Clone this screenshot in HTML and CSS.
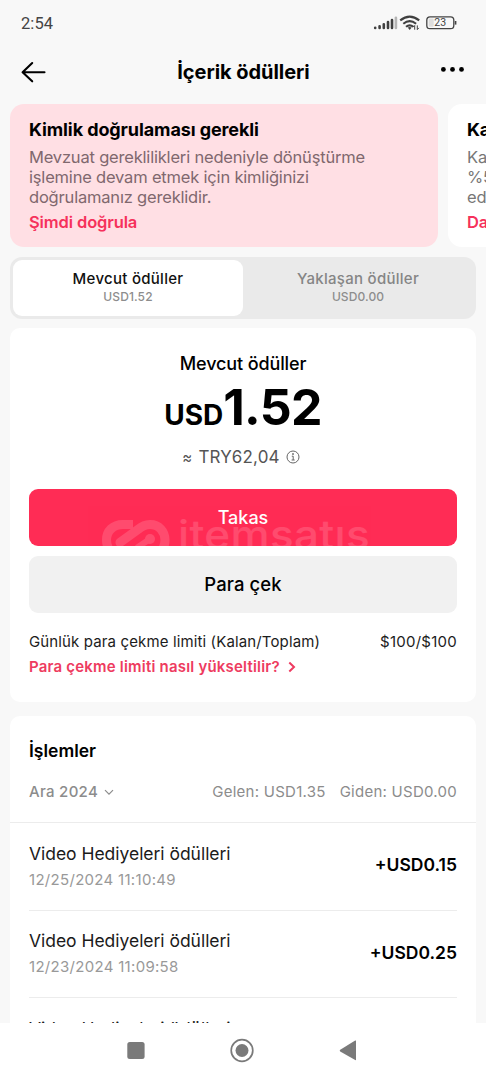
FILE: index.html
```
<!DOCTYPE html>
<html lang="tr">
<head>
<meta charset="utf-8">
<title>İçerik ödülleri</title>
<link rel="stylesheet" href="styles.css">
</head>
<body>
<div class="screen">
  <div class="status">
    <span class="clock">2:54</span>
    <svg class="status-icons" width="84" height="18" viewBox="0 0 84 18">
      <g stroke="#404040" stroke-width="2.6" stroke-linecap="round">
        <path d="M2.2 14v-.3M6.6 14v-1.8M10.8 14v-3.8M15 14v-6M19 14v-8"/>
        <path d="M22.9 14V3.8" stroke="#b5b5b5"/>
      </g>
      <g fill="none" stroke="#404040" stroke-width="2.1">
        <path d="M27.2 6.4q9.5-7.6 19 0"/>
        <path d="M30.3 9.7q6.4-5.2 12.8 0"/>
        <path d="M33 12.8q3.7-3 7.4 0"/>
      </g>
      <path d="M34.7 13.6q2-1.3 4 0l-2 2.4z" fill="#404040"/>
      <path d="M41.7 15.7v-4.2l-1.5 1.6M44.3 11.4v4.2l1.5-1.7" fill="none" stroke="#404040" stroke-width="1"/>
      <rect x="53.8" y="2.8" width="27" height="11.8" rx="3.2" fill="none" stroke="#444" stroke-width="1.3"/>
      <rect x="55.7" y="4.6" width="5" height="8.2" rx="1.2" fill="#dedede"/>
      <path d="M82.6 7v3.6" stroke="#444" stroke-width="1.6"/>
      <text class="battery" x="67.2" y="12.4" text-anchor="middle">23</text>
    </svg>
  </div>

  <header class="nav">
    <svg width="26" height="22" viewBox="0 0 26 22" fill="none" stroke="#000" stroke-width="2.1" stroke-linecap="round" stroke-linejoin="round"><path d="M11.2 2 1.6 11.3l9.6 9M1.8 11.3H23.5"/></svg>
    <h1>İçerik ödülleri</h1>
    <svg width="26" height="8" viewBox="0 0 26 8"><circle cx="3.4" cy="4.4" r="2.4"/><circle cx="12.5" cy="4.4" r="2.4"/><circle cx="21.5" cy="4.4" r="2.4"/></svg>
  </header>

  <section class="notices">
    <article class="notice notice-alert">
      <h2>Kimlik doğrulaması gerekli</h2>
      <p>Mevzuat gereklilikleri nedeniyle dönüştürme<br>işlemine devam etmek için kimliğinizi<br>doğrulamanız gereklidir.</p>
      <a>Şimdi doğrula</a>
    </article>
    <article class="notice">
      <h2>Ka</h2>
      <p>Ka<br>%5<br>ed</p>
      <a>Da</a>
    </article>
  </section>

  <div class="tabs">
    <div class="tab tab-active"><b>Mevcut ödüller</b><span>USD1.52</span></div>
    <div class="tab"><b>Yaklaşan ödüller</b><span>USD0.00</span></div>
  </div>

  <section class="card balance">
    <h2>Mevcut ödüller</h2>
    <div class="amount"><span class="currency">USD</span><span class="value">1.52</span></div>
    <div class="approx"><span class="tilde">≈</span><span>TRY62,04</span>
      <svg width="14" height="14" viewBox="0 0 14 14" fill="none" stroke="#666" stroke-width="1"><circle cx="7" cy="7" r="6"/><path d="M5.8 6.2H7.2V10M5.6 10h3.1"/><circle cx="7" cy="4" r=".5" fill="#666"/></svg>
    </div>
    <div class="button button-primary">
      <span>Takas</span>
      <div class="brand">
        <svg width="68" height="40" viewBox="0 0 68 40" fill="none" stroke="#fff" stroke-width="9" stroke-linecap="round">
          <path d="M31 4.5H21C11 4.5 4.5 11 4.5 20c0 8 5 14 13 15.500" stroke-linecap="butt"/>
          <path d="M18 22.500 36 9.500C40 6 45 4.500 48 4.500c9 0 15 7 15 15.500 0 9-6 15.500-15 15.500"/>
          <path d="m48 19-12 8" stroke-width="6"/>
          <circle cx="48" cy="19" r="5" fill="#fff" stroke="none"/>
        </svg>
        <span>itemsatış</span>
      </div>
    </div>
    <div class="button button-secondary"><span>Para çek</span></div>
    <div class="limit"><span>Günlük para çekme limiti (Kalan/Toplam)</span><span class="limit-value">$100/$100</span></div>
    <a class="limit-link">Para çekme limiti nasıl yükseltilir?
      <svg width="8" height="12" viewBox="0 0 8 12" fill="none" stroke="#ee3b60" stroke-width="2"><path d="M1.300 1.500 6 6l-4.700 4.500"/></svg></a>
  </section>

  <section class="card history">
    <div class="history-head">
      <h2>İşlemler</h2>
      <div class="filters">
        <span class="month">Ara 2024</span>
        <svg width="10" height="7" viewBox="0 0 10 7" fill="none" stroke="#8c8c8c" stroke-width="1.2"><path d="M1 1.200 5 5.200l4-4"/></svg>
        <span class="incoming">Gelen: USD1.35</span><span>Giden: USD0.00</span>
      </div>
    </div>
    <div class="row"><div><h3>Video Hediyeleri ödülleri</h3><time>12/25/2024 11:10:49</time></div><strong>+USD0.15</strong></div>
    <div class="row"><div><h3>Video Hediyeleri ödülleri</h3><time>12/23/2024 11:09:58</time></div><strong>+USD0.25</strong></div>
    <div class="row"><div><h3>Video Hediyeleri ödülleri</h3></div></div>
  </section>

  <nav class="system">
    <svg width="486" height="57" viewBox="0 0 486 57" fill="#7a7a7a">
      <rect x="127.300" y="19" width="17.300" height="17" rx="2.500"/>
      <circle cx="242" cy="27.500" r="10.800" fill="none" stroke="#7a7a7a" stroke-width="1.700"/><circle cx="242" cy="27.500" r="6.500"/>
      <path d="M356 18v18.600q0 .8-.8.4L340.200 28.400q-1-.9 0-1.700L355.200 17.600q.8-.4.8.4z"/>
    </svg>
  </nav>
</div>
</body>
</html>
```
FILE: styles.css
```
* { box-sizing: border-box; }
body { margin: 0; background: #f8f8f8; font-family: Inter, "Noto Sans", sans-serif; color: #000; }
h1, h2, h3, p { margin: 0; }
.screen { width: 486px; height: 1080px; overflow: hidden; display: flex; flex-direction: column; }

.status { height: 45px; flex: none; display: flex; justify-content: space-between; padding: 14px 29px 0 21px; }
.clock { font: 400 16.5px/20px Roboto, sans-serif; color: #444; letter-spacing: .1px; }
.status-icons { display: block; }
.battery { font: 400 10.5px Roboto, sans-serif; fill: #444; }

.nav { height: 59px; flex: none; display: flex; justify-content: space-between; padding: 0 20px 0 21px; }
.nav svg { flex: none; margin-top: 16px; }
.nav svg:last-child { margin-top: 20px; }
.nav h1 { font-size: 20px; line-height: 24px; font-weight: 700; margin-top: 15px; letter-spacing: -.05px; }

.notices { display: flex; flex: none; gap: 10px; padding-left: 10px; height: 143px; }
.notice { width: 428px; flex: none; border-radius: 14px; background: #fff; padding: 15px 19px; }
.notice-alert { background: #ffdfe4; }
.notice h2 { font-size: 18px; line-height: 22px; font-weight: 700; letter-spacing: -.1px; white-space: nowrap; }
.notice p { margin-top: 5.5px; font-size: 16.5px; line-height: 20.3px; letter-spacing: -.19px; color: #777; }
.notice-alert p { color: #80686e; }
.notice a { display: block; margin-top: 4.5px; font-size: 16.5px; line-height: 21px; font-weight: 600; letter-spacing: -.12px; color: #f6315b; }

.tabs { display: flex; flex: none; height: 62px; margin: 10px 10px 0; padding: 3px; border-radius: 12px; background: #eaeaea; }
.tab { flex: 1; display: flex; flex-direction: column; align-items: center; border-radius: 9px; padding-top: 9px; color: #858585; }
.tab-active { background: #fff; }
.tab b { font-size: 15px; line-height: 19px; font-weight: 500; letter-spacing: .28px; }
.tab-active b { color: #111; }
.tab span { font-size: 12px; line-height: 16px; font-weight: 500; letter-spacing: .1px; margin-top: 1px; color: #8d8d8d; }

.card { background: #fff; border-radius: 10px; margin: 0 10px; }
.balance { flex: none; height: 374px; margin-top: 9px; padding: 24px 19px 0; }
.balance h2 { font-size: 18px; line-height: 24px; font-weight: 500; letter-spacing: -.12px; text-align: center; }
.amount { display: flex; justify-content: center; align-items: baseline; height: 60px; margin-top: 1px; line-height: 60px; font-weight: 700; }
.currency { font-size: 28px; }
.value { font-size: 50px; letter-spacing: -.7px; }
.approx { display: flex; justify-content: center; align-items: center; height: 24px; margin-top: 8px; padding-right: 4px; font-size: 17px; color: #555; gap: 6px; letter-spacing: .15px; }
.tilde { font-size: 15px; }
.button { position: relative; overflow: hidden; height: 57px; border-radius: 9px; display: flex; justify-content: center; align-items: center; font-size: 18.5px; font-weight: 500; }
.button-primary { background: #ff2c55; color: #fff; margin-top: 20px; }
.button-primary > span { font-size: 18px; }
.button-secondary { background: #f1f1f1; margin-top: 10px; padding-bottom: 2px; letter-spacing: .1px; }
.brand { position: absolute; left: 73px; top: 31px; display: flex; gap: 8px; opacity: .15; }
.brand svg { flex: none; }
.brand span { font-size: 40px; line-height: 40px; font-weight: 500; letter-spacing: .3px; margin-top: -5px; transform: scaleX(1.1); transform-origin: 0 0; }
.limit { display: flex; justify-content: space-between; margin-top: 19px; font-size: 15px; line-height: 20px; letter-spacing: .13px; color: #1c1c1c; }
.limit-value { letter-spacing: .25px; }
.limit-link { display: flex; align-items: center; gap: 8px; margin-top: 5px; font-size: 15px; line-height: 20px; font-weight: 600; letter-spacing: .2px; color: #ee3b60; }

.history { flex: 1; margin-top: 14px; border-radius: 10px 10px 0 0; overflow: hidden; min-height: 0; }
.history-head { height: 107px; padding: 23px 19px 0; border-bottom: 1px solid #ececec; }
.history h2 { font-size: 17.5px; line-height: 24px; font-weight: 600; }
.filters { display: flex; align-items: center; margin-top: 19px; font-size: 15px; line-height: 20px; color: #8c8c8c; letter-spacing: .26px; }
.month { font-weight: 500; letter-spacing: .3px; margin-right: 6px; }
.incoming { margin-left: auto; margin-right: 14px; }
.row { display: flex; justify-content: space-between; align-items: center; height: 87.5px; margin: 0 19px; padding-bottom: 1px; border-bottom: 1px solid #ececec; }
.row:last-child { align-items: flex-start; padding-top: 18.5px; }
.row h3 { font-size: 17.5px; line-height: 24px; font-weight: 400; letter-spacing: -.03px; color: #1b1b1b; }
.row time { display: block; font-size: 15px; line-height: 20px; margin-top: 4px; letter-spacing: .3px; color: #999; }
.row strong { font-size: 17.5px; font-weight: 600; margin-top: -2px; }

.system { flex: none; height: 57px; background: #fff; }
.system svg { display: block; }
```
